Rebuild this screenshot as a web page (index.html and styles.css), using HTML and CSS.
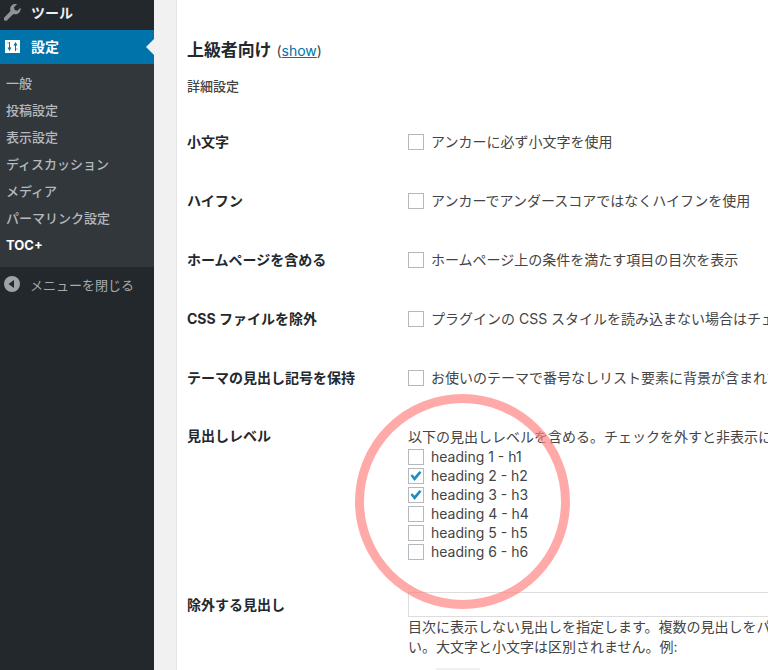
FILE: index.html
```html
<!DOCTYPE html>
<html lang="ja">
<head>
<meta charset="utf-8">
<title>TOC+ 設定</title>
<link rel="stylesheet" href="styles.css">
</head>
<body>
<div class="app">
  <nav class="sidebar">
    <a class="top-item tools">
      <svg class="menu-icon" viewBox="0 0 20 20"><path d="M18.300 5.300l-3.400 3.300-3-.9-.8-2.900 3.400-3.300c-2.100-.7-4.500-.2-6 1.300-1.700 1.700-2.100 4.100-1.200 6.200l-7 7c-.9.9-.9 2.300 0 3.100.9.900 2.300.9 3.100 0l7-7c2.100.9 4.500.5 6.200-1.200 1.500-1.500 2.400-3.500 1.700-5.600z"/></svg>
      <span>ツール</span>
    </a>
    <a class="top-item current">
      <svg class="settings-icon" viewBox="0 0 15 13"><path class="icon-box" d="M0 0h15v13H0z"/><path class="icon-cut" d="M4 2h1v5.500h1.500L4.500 11l-2-3.500H4zM10 11V5.500H8.500L10.500 2l2 3.500H11V11zM2.500 2.500h1v1h-1zM11.500 8.500h1v1h-1z"/></svg>
      <span>設定</span>
    </a>
    <ul class="submenu">
      <li>一般</li>
      <li>投稿設定</li>
      <li>表示設定</li>
      <li>ディスカッション</li>
      <li>メディア</li>
      <li>パーマリンク設定</li>
      <li class="active">TOC+</li>
    </ul>
    <a class="collapse">
      <svg class="collapse-icon" viewBox="0 0 16 16"><circle cx="8" cy="8" r="8"/><path class="collapse-arrow" d="M10 4v8L4.500 8z"/></svg>
      <span>メニューを閉じる</span>
    </a>
  </nav>
  <main class="content">
    <section class="panel">
      <h3 class="section-title">上級者向け <span class="toggle">(<a href="#">show</a>)</span></h3>
      <p class="section-note">詳細設定</p>
      <div class="rows">
        <div class="row">
          <div class="label">小文字</div>
          <label class="field"><span class="box"></span>アンカーに必ず小文字を使用</label>
        </div>
        <div class="row">
          <div class="label">ハイフン</div>
          <label class="field"><span class="box"></span>アンカーでアンダースコアではなくハイフンを使用</label>
        </div>
        <div class="row">
          <div class="label">ホームページを含める</div>
          <label class="field"><span class="box"></span>ホームページ上の条件を満たす項目の目次を表示</label>
        </div>
        <div class="row">
          <div class="label">CSS ファイルを除外</div>
          <label class="field"><span class="box"></span>プラグインの CSS スタイルを読み込まない場合はチェックを入れてください</label>
        </div>
        <div class="row">
          <div class="label">テーマの見出し記号を保持</div>
          <label class="field"><span class="box"></span>お使いのテーマで番号なしリスト要素に背景が含まれている場合はチェック</label>
        </div>
        <div class="row levels">
          <div class="label">見出しレベル</div>
          <div class="level-body">
            <div class="level-intro">以下の見出しレベルを含める。チェックを外すと非表示になります。</div>
            <label class="level"><span class="box"></span>heading 1 - h1</label>
            <label class="level"><span class="box checked"><svg viewBox="0 0 14 14"><path d="M1.500 6.800l1.700-1.600 2.300 2.500 5-5.700 2 1.500-6.900 8.500z"/></svg></span>heading 2 - h2</label>
            <label class="level"><span class="box checked"><svg viewBox="0 0 14 14"><path d="M1.500 6.800l1.700-1.600 2.300 2.500 5-5.700 2 1.500-6.900 8.500z"/></svg></span>heading 3 - h3</label>
            <label class="level"><span class="box"></span>heading 4 - h4</label>
            <label class="level"><span class="box"></span>heading 5 - h5</label>
            <label class="level"><span class="box"></span>heading 6 - h6</label>
          </div>
        </div>
        <div class="row exclude">
          <div class="label">除外する見出し</div>
          <div class="exclude-body">
            <div class="text-input"></div>
            <p class="hint">目次に表示しない見出しを指定します。複数の見出しをパイプで区切ってください<br>い。大文字と小文字は区別されません。例:</p>
            <div class="example"></div>
          </div>
        </div>
      </div>
    </section>
  </main>
</div>
<div class="ring"></div>
</body>
</html>
```
FILE: styles.css
```css
* { box-sizing: border-box; }
html, body { margin: 0; height: 670px; overflow: hidden; }
body {
  font-family: Inter, "Noto Sans CJK JP", sans-serif;
  font-size: 14px;
  color: #444;
  background: #f1f1f1;
  position: relative;
}
.app { display: flex; height: 670px; }
.sidebar {
  width: 154px;
  flex: none;
  background: #23282d;
  color: #eee;
  font-size: 13px;
  display: flex;
  flex-direction: column;
}
.top-item {
  display: flex;
  align-items: center;
  font-size: 14px;
  font-weight: 700;
}
.tools { height: 30px; padding: 0 0 7px 4px; gap: 9px; }
.current {
  height: 34px;
  padding: 0 0 2px 5px;
  gap: 11px;
  background: #0073aa;
  color: #fff;
  position: relative;
}
.current::after {
  content: "";
  position: absolute;
  right: 0;
  top: 9px;
  border: 8px solid transparent;
  border-right-color: #f1f1f1;
  border-left-width: 0;
}
.menu-icon { width: 18px; height: 18px; fill: #8f9397; flex: none; }
.settings-icon { width: 15px; height: 13px; flex: none; }
.icon-box { fill: #fff; }
.icon-cut { fill: #0073aa; }
.submenu {
  list-style: none;
  margin: 0;
  padding: 6px 0 8px;
  background: #32373c;
  color: #b4b9be;
}
.submenu li { height: 27px; line-height: 27px; padding-left: 6px; font-weight: 500; }
.submenu .active { color: #fff; font-weight: 700; }
.collapse {
  display: flex;
  align-items: center;
  gap: 10px;
  height: 36px;
  padding: 0 0 2px 4px;
  color: #aaa;
}
.collapse-icon { width: 16px; height: 16px; fill: #9ea3a8; }
.collapse-arrow { fill: #23282d; }
.content { flex: 1; min-width: 0; padding-left: 22px; overflow: hidden; }
.panel {
  height: 670px;
  background: #fff;
  border-left: 1px solid #e5e5e5;
  padding: 39px 0 0 10px;
  white-space: nowrap;
}
.section-title { margin: 0; font-size: 16.9px; line-height: 22px; color: #23282d; font-weight: 700; }
.toggle { font-size: 14px; font-weight: 400; color: #444; margin-left: 1px; }
.toggle a { color: #0073aa; text-decoration: underline; }
.section-note { margin: 14px 0 0; font-size: 13px; line-height: 20px; color: #444; font-weight: 500; }
.rows { margin-top: 36px; }
.row { display: flex; height: 59px; }
.label {
  width: 221px;
  flex: none;
  font-weight: 700;
  line-height: 20px;
  color: #23282d;
}
.field, .level { display: flex; align-items: center; gap: 7px; line-height: 20px; height: 20px; }
.box {
  width: 16px;
  height: 16px;
  flex: none;
  background: #fff;
  border: 1px solid #b4b9be;
  display: block;
}
.checked svg { display: block; width: 14px; height: 14px; fill: #1e8cbe; }
.levels { height: 165px; }
.levels .label { margin-top: -1px; }
.level-intro { line-height: 20px; height: 20px; }
.level { height: 19px; }
.exclude { height: auto; }
.exclude .label { padding-top: 3px; }
.exclude-body { flex: 1; }
.text-input { height: 25px; border: 1px solid #ddd; width: 400px; background: #fff; }
.hint { margin: 0; line-height: 20px; }
.example { margin: 11px 0 0 28px; width: 44px; height: 20px; background: #f0f0f0; }
.ring {
  position: absolute;
  left: 355px;
  top: 394px;
  width: 215px;
  height: 215px;
  border-radius: 50%;
  border: 9px solid rgba(255, 128, 128, 0.68);
}
```
